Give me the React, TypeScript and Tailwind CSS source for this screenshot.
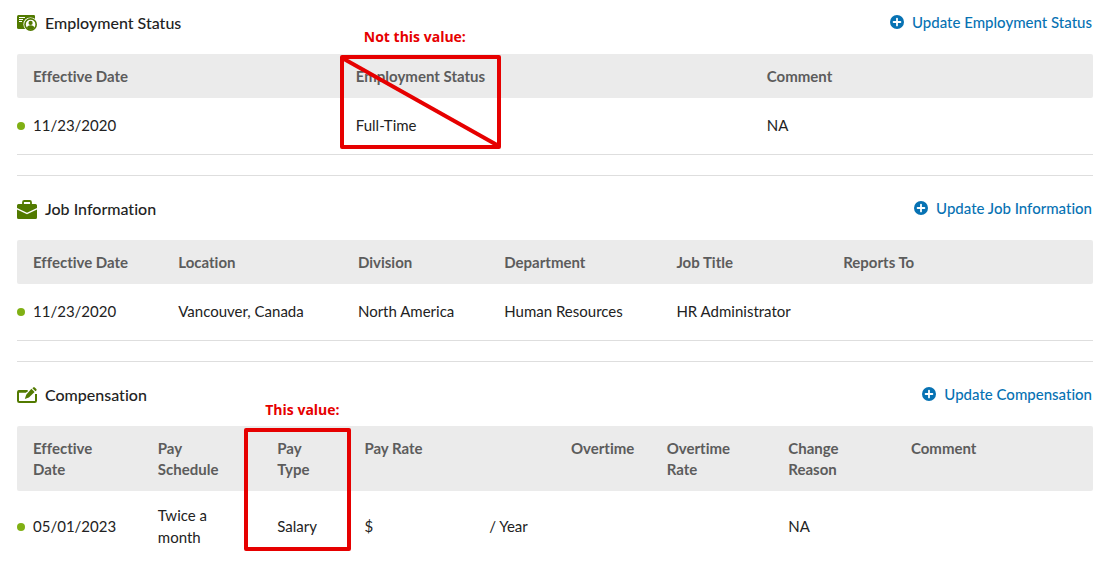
import type { ReactNode } from "react";

function StatusIcon() {
  return (
    <svg viewBox="0 0 20 16" className="h-4 w-5 shrink-0" aria-hidden="true">
      <rect x="0" y="0" width="18" height="14" rx="1.5" fill="#527a00" />
      <path d="M2 2.5h6M2 4.500h4M2 6.500h3" stroke="#fff" strokeWidth="1" />
      <circle cx="13.6" cy="9.4" r="7.2" fill="#fff" />
      <path d="M6 0h10.5A1.5 1.5 0 0 1 18 1.5V3.500C15 1.800 11.500 1.900 9 3.500z" fill="#527a00" />
      <circle cx="13.6" cy="9.5" r="5.6" fill="#fff" stroke="#527a00" strokeWidth="1.6" />
      <circle cx="13.6" cy="7.9" r="2.1" fill="#527a00" />
      <path d="M10 12.9c0-1.8 1.4-2.6 3.6-2.6s3.6.8 3.6 2.6c-1 1-2.2 1.5-3.6 1.5S11 13.9 10 12.9z" fill="#527a00" />
    </svg>
  );
}

function BriefcaseIcon() {
  return (
    <svg viewBox="0 0 20 19" className="h-[19px] w-5 shrink-0" aria-hidden="true">
      <path d="M6 4V2.2C6 1.5 6.5 1 7.2 1h5.6c.7 0 1.2.5 1.2 1.2V4" fill="none" stroke="#527a00" strokeWidth="1.8" />
      <path d="M1.5 4h17A1.5 1.5 0 0 1 20 5.5V8l-10 4.800L0 8V5.500A1.500 1.500 0 0 1 1.500 4z" fill="#527a00" />
      <path d="M0 9.600l10 4.700 10-4.700v7.900a1.500 1.500 0 0 1-1.500 1.500h-17A1.500 1.500 0 0 1 0 17.500z" fill="#527a00" />
    </svg>
  );
}

function PencilCardIcon() {
  return (
    <svg viewBox="0 0 20 16" className="h-4 w-5 shrink-0" aria-hidden="true">
      <path d="M10.500 4H2.200C1.500 4 1 4.400 1 5v8.800c0 .7.500 1.200 1.200 1.200h15.600c.7 0 1.200-.5 1.200-1.200V7" fill="none" stroke="#527a00" strokeWidth="2" />
      <path d="M1 3.500h10l-2 2.300H1z" fill="#527a00" />
      <path d="M14.400 1.800l3.200 3.200-5.700 5.400-4.100 1.600 1.400-4.200z" fill="#527a00" />
      <path d="M15.400 1.200l.7-.7c.5-.5 1.200-.5 1.700 0l1.500 1.400c.5.500.5 1.200 0 1.700l-.8.7z" fill="#527a00" />
    </svg>
  );
}

function PlusIcon() {
  return (
    <svg viewBox="0 0 14 14" className="size-3.5 shrink-0" aria-hidden="true">
      <circle cx="7" cy="7" r="7" fill="#0772b3" />
      <path d="M7 3.600v6.800M3.600 7h6.800" stroke="#fff" strokeWidth="1.800" strokeLinecap="round" />
    </svg>
  );
}

type SectionProps = { title: string; icon: ReactNode; first?: boolean; children: ReactNode };

function Section({ title, icon, first, children }: SectionProps) {
  return (
    <section className={first ? "" : "mt-5 border-t border-[#dedede] pt-3"}>
      <div className="mb-2.5 flex h-[42px] items-center justify-between">
        <h2 className="flex items-center gap-2 text-base font-medium text-[#222]">
          {icon}
          {title}
        </h2>
        <a href="#" className="flex items-center gap-2 pr-px pb-0.5 text-[15px] font-medium text-[#0772b3]">
          <PlusIcon />
          Update {title}
        </a>
      </div>
      {children}
    </section>
  );
}

function Th({ children, span }: { children: ReactNode; span?: number }) {
  return (
    <th
      scope="col"
      colSpan={span}
      className="bg-[#ebebeb] pt-3 pr-5 pb-[11px] pl-4 align-top font-bold text-[#5c5c5c] first:rounded-l-xs last:rounded-r-xs"
    >
      <div className="relative">{children}</div>
    </th>
  );
}

function Td({ children }: { children?: ReactNode }) {
  return <td className="pr-5 pb-0.5 pl-4">{children}</td>;
}

function DateCell({ children }: { children: ReactNode }) {
  return (
    <td className="pb-0.5">
      <div className="flex items-center gap-2">
        <span className="mt-0.5 size-2 shrink-0 rounded-full bg-[#80b014]" />
        {children}
      </div>
    </td>
  );
}

const tableClass = "w-full table-fixed border-separate border-spacing-0 text-left text-[15px] leading-[22px] text-[#222]";
const noteClass = "pointer-events-none absolute z-10 font-['Open_Sans',sans-serif] text-sm leading-4 font-bold whitespace-nowrap text-[#e60000]";
const boxClass = "pointer-events-none absolute z-10 rounded-xs border-4 border-[#e60000]";

export default function App() {
  return (
    <main className="bg-white pt-0.5 pr-[21px] pl-[17px] font-[Lato,sans-serif] [font-variant-ligatures:no-common-ligatures]">
      <Section title="Employment Status" icon={<StatusIcon />} first>
        <table className={tableClass}>
          <colgroup>
            <col className="w-[30%]" />
            <col className="w-[38.2%]" />
            <col />
          </colgroup>
          <thead className="leading-[21px]">
            <tr>
              <Th>Effective Date</Th>
              <Th>
                Employment Status
                <span className={`${noteClass} -top-[37px] left-2`}>Not this value:</span>
                <span className={`${boxClass} -top-[11px] -left-4 h-[94px] w-[161px]`}>
                  <svg viewBox="0 0 153 86" className="size-full overflow-visible" aria-hidden="true">
                    <path d="M0 0L153 86" stroke="#e60000" strokeWidth="4" />
                  </svg>
                </span>
              </Th>
              <Th>Comment</Th>
            </tr>
          </thead>
          <tbody>
            <tr className="h-[57px] *:border-b *:border-[#dedede]">
              <DateCell>11/23/2020</DateCell>
              <Td>Full-Time</Td>
              <Td>NA</Td>
            </tr>
          </tbody>
        </table>
      </Section>

      <Section title="Job Information" icon={<BriefcaseIcon />}>
        <table className={tableClass}>
          <colgroup>
            <col className="w-[13.5%]" />
            <col className="w-[16.7%]" />
            <col className="w-[13.6%]" />
            <col className="w-[16%]" />
            <col className="w-[15.5%]" />
            <col />
          </colgroup>
          <thead className="leading-[21px]">
            <tr>
              <Th>Effective Date</Th>
              <Th>Location</Th>
              <Th>Division</Th>
              <Th>Department</Th>
              <Th>Job Title</Th>
              <Th>Reports To</Th>
            </tr>
          </thead>
          <tbody>
            <tr className="h-[57px] *:border-b *:border-[#dedede]">
              <DateCell>11/23/2020</DateCell>
              <Td>Vancouver, Canada</Td>
              <Td>North America</Td>
              <Td>Human Resources</Td>
              <Td>HR Administrator</Td>
              <Td />
            </tr>
          </tbody>
        </table>
      </Section>

      <Section title="Compensation" icon={<PencilCardIcon />}>
        <table className={tableClass}>
          <colgroup>
            <col className="w-[11.6%]" />
            <col className="w-[11.1%]" />
            <col className="w-[8.1%]" />
            <col className="w-[11.6%]" />
            <col className="w-[7.6%]" />
            <col className="w-[8.9%]" />
            <col className="w-[11.3%]" />
            <col className="w-[11.4%]" />
            <col />
          </colgroup>
          <thead className="leading-[21px]">
            <tr>
              <Th>Effective Date</Th>
              <Th>Pay Schedule</Th>
              <Th>
                Pay Type
                <span className={`${noteClass} -top-9 -left-3`}>This value:</span>
                <span className={`${boxClass} -top-2.5 -left-[33px] h-[123px] w-[107px]`} />
              </Th>
              <Th span={2}>Pay Rate</Th>
              <Th>Overtime</Th>
              <Th>Overtime Rate</Th>
              <Th>Change Reason</Th>
              <Th>Comment</Th>
            </tr>
          </thead>
          <tbody>
            <tr className="h-[71px]">
              <DateCell>05/01/2023</DateCell>
              <Td>Twice a month</Td>
              <Td>Salary</Td>
              <Td>$</Td>
              <Td>/ Year</Td>
              <Td />
              <Td />
              <Td>NA</Td>
              <Td />
            </tr>
          </tbody>
        </table>
      </Section>
    </main>
  );
}
